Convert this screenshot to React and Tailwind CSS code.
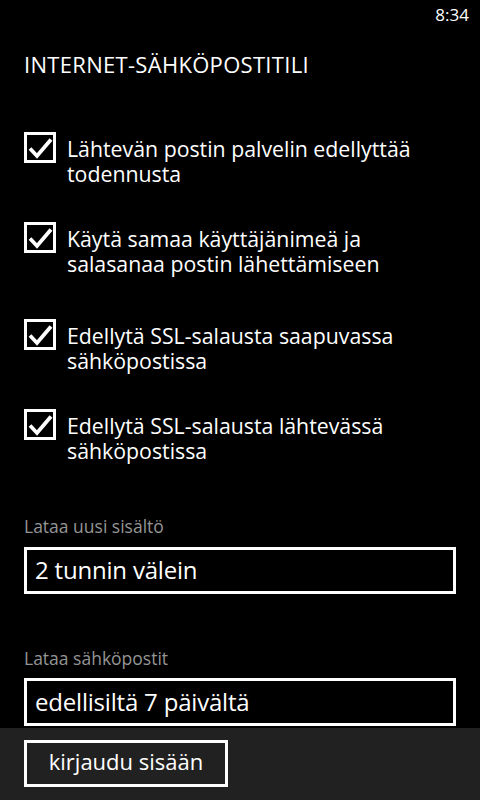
export default function App() {
  const items = [
    { t: ["Lähtevän postin palvelin edellyttää", "todennusta"], mt: "mt-0" },
    { t: ["Käytä samaa käyttäjänimeä ja", "salasanaa postin lähettämiseen"], mt: "mt-[36px]" },
    { t: ["Edellytä SSL-salausta saapuvassa", "sähköpostissa"], mt: "mt-[43px]" },
    { t: ["Edellytä SSL-salausta lähtevässä", "sähköpostissa"], mt: "mt-[36px]" },
  ];
  return (
    <div
      className="w-[480px] h-[800px] bg-black text-white flex flex-col overflow-hidden"
      style={{ fontFamily: '"Open Sans", "Noto Sans", sans-serif' }}
    >
      <div className="h-[32px] flex justify-end items-start pr-[11px] pt-[6px] text-[17px] leading-none">
        8:34
      </div>
      <div className="px-[24px] pt-[20px] text-[22px] leading-[24px] tracking-[0.3px]">
        INTERNET-SÄHKÖPOSTITILI
      </div>
      <div className="flex flex-col px-[24px] pt-[56px]">
        {items.map((it, i) => (
          <div key={i} className={`flex items-start gap-[11px] ${it.mt}`}>
            <div className="w-[32px] h-[31px] border-[3px] border-white shrink-0">
              <svg width="26" height="25" viewBox="0 0 26 25" className="block">
                <path d="M3 13.5 L10 21 L24 4.5" fill="none" stroke="white" strokeWidth="3.8" strokeLinecap="butt" strokeLinejoin="miter" />
              </svg>
            </div>
            <div className="text-[21.3px] leading-[25px] pt-[4px]">
              {it.t[0]}
              <br />
              {it.t[1]}
            </div>
          </div>
        ))}
      </div>
      <div className="px-[24px] pt-[53px] text-[17.5px] leading-[20px] text-[#959595]">Lataa uusi sisältö</div>
      <div className="mx-[24px] mt-[11px] h-[47px] border-[3px] border-white flex items-start pl-[8px] pt-[8px] text-[24px] leading-[24px] tracking-[-0.2px]">
        2 tunnin välein
      </div>
      <div className="px-[24px] pt-[54px] text-[17.5px] leading-[20px] text-[#959595]">Lataa sähköpostit</div>
      <div className="mx-[24px] mt-[10px] h-[48px] border-[3px] border-white flex items-start pl-[8px] pt-[9px] text-[24px] leading-[24px] tracking-[-0.2px]">
        edellisiltä 7 päivältä
      </div>
      <div className="mt-auto h-[72px] bg-[#212121] px-[24px] pt-[12px]">
        <div className="w-[204px] h-[47px] border-[3px] border-white flex items-start justify-center pt-[6px] text-[22px] leading-[24px]">
          kirjaudu sisään
        </div>
      </div>
    </div>
  );
}
